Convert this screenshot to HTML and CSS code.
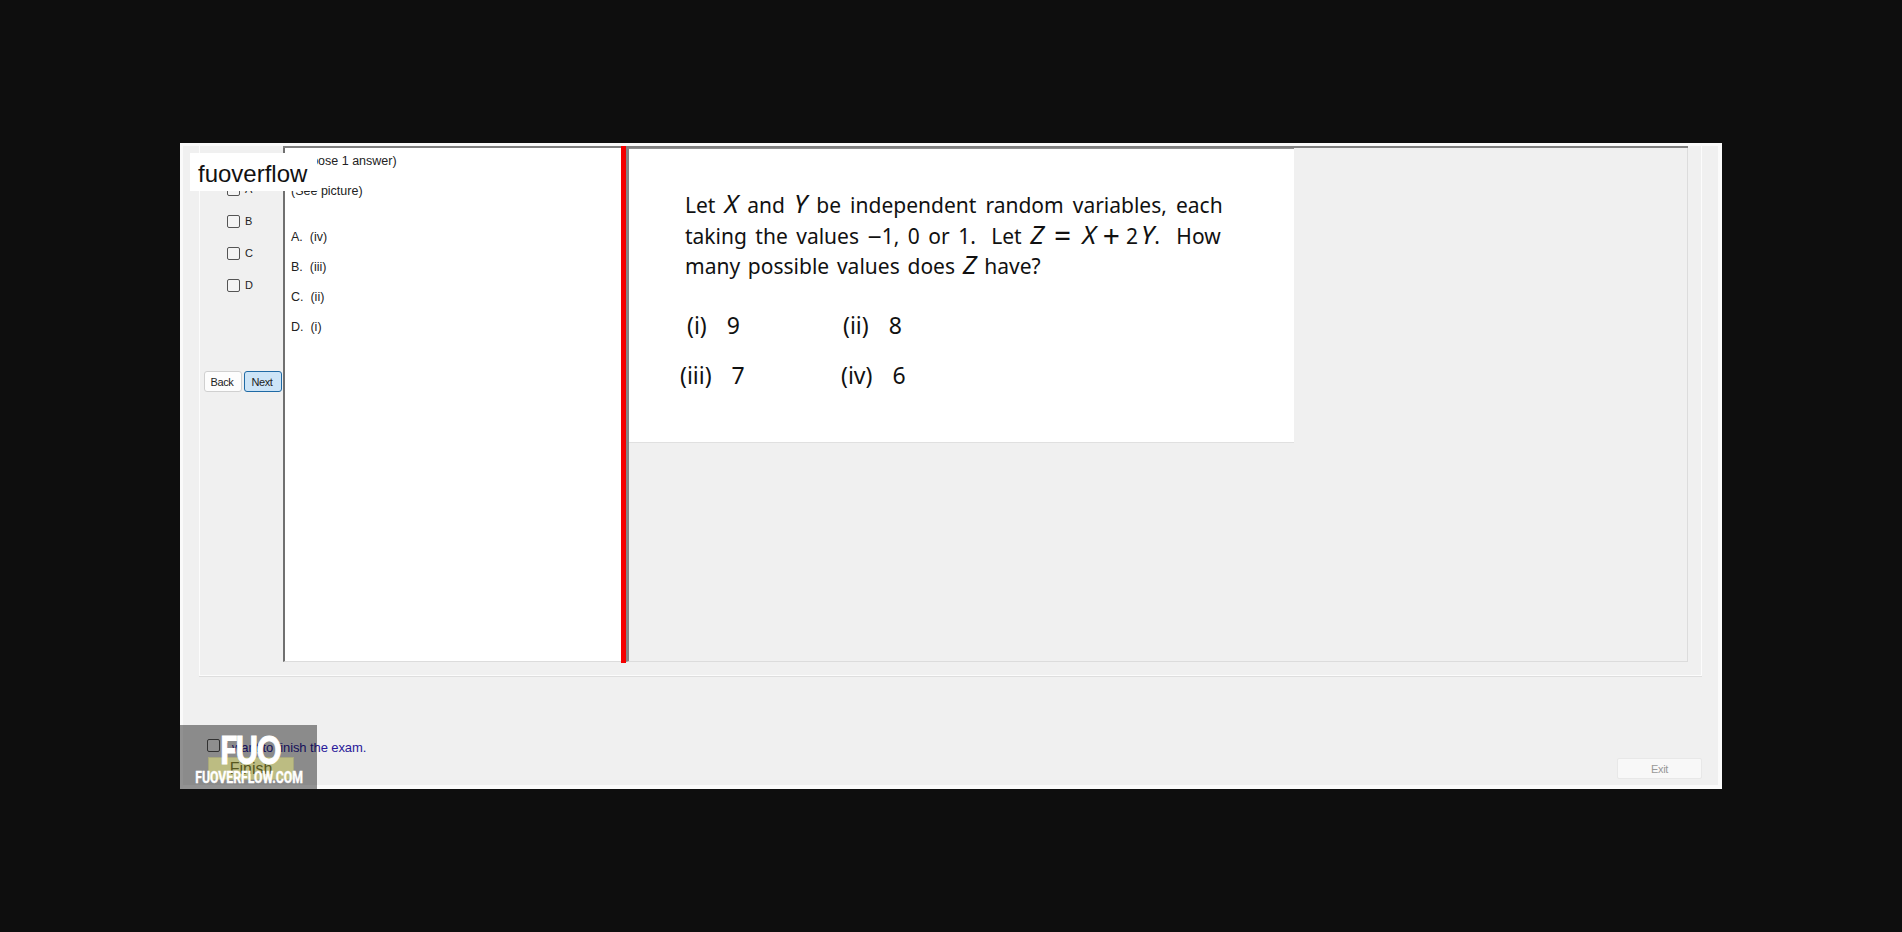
FILE: index.html
```html
<!DOCTYPE html>
<html lang="en">
    <head>
        <meta charset="UTF-8">
        <title>Exam Client</title>
        <link rel="stylesheet" href="styles.css">
    </head>
    <body>
      <div class="window">
        <div class="watermark">fuoverflow</div>
        <div class="group">
          <div class="answers">
            <label class="answer"><input type="checkbox"> A</label>
            <label class="answer"><input type="checkbox"> B</label>
            <label class="answer"><input type="checkbox"> C</label>
            <label class="answer"><input type="checkbox"> D</label>
            <div class="nav">
              <button type="button" class="nav-btn">Back</button>
              <button type="button" class="nav-btn nav-next">Next</button>
            </div>
          </div>
          <div class="panel">
            <div class="question">
              <p class="q-head">(Choose 1 answer)</p>
              <p class="q-see">(See picture)</p>
              <p class="q-opt">A.&nbsp; (iv)</p>
              <p class="q-opt">B.&nbsp; (iii)</p>
              <p class="q-opt">C.&nbsp; (ii)</p>
              <p class="q-opt">D.&nbsp; (i)</p>
            </div>
            <div class="splitter"></div>
            <div class="viewer">
              <div class="picture">
                <p class="pic-text pic-line1">Let <i>X</i> and <i>Y</i> be independent random variables, each</p>
                <p class="pic-text">taking the values <span class="minus">&minus;</span>1, 0 or 1.<span class="gap"></span> Let <i>Z</i><span class="op op-eq">=</span><i>X</i><span class="op op-plus">+</span>2<i class="pic-y">Y</i>.<span class="gap gap-how"></span> How</p>
                <p class="pic-text pic-line3">many possible values does <i>Z</i> have?</p>
                <div class="pic-options">
                  <div class="pic-opt pic-i">(i)<span>9</span></div>
                  <div class="pic-opt pic-ii">(ii)<span>8</span></div>
                  <div class="pic-opt">(iii)<span>7</span></div>
                  <div class="pic-opt pic-iv">(iv)<span>6</span></div>
                </div>
              </div>
            </div>
          </div>
        </div>
        <div class="footer">
          <div class="finish">
            <label class="finish-check"><input type="checkbox"> <span class="finish-text">I want to finish the exam.</span></label>
            <button type="button" class="finish-btn">Finish</button>
          </div>
          <button type="button" class="exit-btn">Exit</button>
        </div>
        <div class="logo">
          <span class="logo-mark">FUO</span>
          <span class="logo-name">FUOVERFLOW.COM</span>
        </div>
      </div>
    </body>
</html>
```
FILE: styles.css
```css
body {
    background: #0e0e0e;
    margin: 0;
    padding: 0;
    height: 100vh;
    display: flex;
    align-items: center;
    justify-content: center;
    font-family: "Liberation Sans", Arial, sans-serif;
}

p { margin: 0; }

input[type=checkbox] {
    appearance: none;
    width: 13px;
    height: 13px;
    margin: 0;
    background: #f4f4f4;
    border: 1px solid #555;
    border-radius: 2px;
    flex: none;
}

.window {
    position: relative;
    width: 1542px;
    height: 646px;
    box-sizing: border-box;
    padding: 3px 0 0 19px;
    background: #f0f0f0;
    box-shadow: inset 3px 3px 0 #fafafa, inset -4px -4px 0 #fbfbfb;
    overflow: hidden;
}

.watermark {
    position: absolute;
    left: 10px;
    top: 10px;
    width: 127px;
    height: 38px;
    box-sizing: border-box;
    padding: 2px 0 0 8px;
    background: #fff;
    color: #111;
    font-size: 24px;
    line-height: 38px;
    z-index: 5;
}

.group {
    display: flex;
    width: 1503px;
    height: 530px;
    box-sizing: border-box;
    padding-bottom: 13px;
    padding-right: 13px;
    border-left: 1px solid #fcfcfc;
    border-right: 1px solid #fcfcfc;
    border-bottom: 1px solid #fcfcfc;
    box-shadow: 0 1px 0 #dedede;
}

.answers {
    width: 83px;
    flex: none;
    padding: 27px 0 0 27px;
    box-sizing: border-box;
}

.answer {
    display: flex;
    align-items: center;
    gap: 5px;
    height: 32px;
    font-size: 11px;
    letter-spacing: -0.2px;
    color: #222;
}

.nav {
    display: flex;
    gap: 2px;
    margin: 70px 0 0 -23px;
}

.nav-btn {
    width: 38px;
    height: 21px;
    padding: 0 2px 0 0;
    background: #fdfdfd;
    border: 1px solid #d0d0d0;
    border-radius: 3px;
    color: #222;
    font-family: inherit;
    font-size: 11px;
    letter-spacing: -0.4px;
}

.nav-next {
    background: #cce4f7;
    border-color: #1f6aa5;
}

.panel {
    display: flex;
    flex: 1;
    border-top: 2px solid #808080;
}

.question {
    width: 338px;
    flex: none;
    box-sizing: border-box;
    padding: 6px 0 0 6px;
    background: #fff;
    border-left: 2px solid #707070;
    border-bottom: 1px solid #dcdcdc;
    color: #222;
    font-size: 12.5px;
    line-height: 14px;
}

.q-head { margin-bottom: 16px; }
.q-see { margin-bottom: 32px; }
.q-opt { margin-bottom: 16px; }

.splitter {
    width: 5px;
    flex: none;
    margin: -2px 0 -1px;
    background: #f40000;
}

.viewer {
    flex: 1;
    background: #f0f0f0;
    border-left: 3px solid #858585;
    border-right: 1px solid #dcdcdc;
    border-bottom: 1px solid #dcdcdc;
}

.picture {
    width: 665px;
    height: 295px;
    box-sizing: border-box;
    padding: 41px 0 0 56px;
    background: #fff;
    border-top: 1px solid #909090;
    border-bottom: 1px solid #e0e0e0;
    color: #111;
}

.pic-text {
    font-family: "Noto Sans", sans-serif;
    font-size: 21px;
    line-height: 30.5px;
    word-spacing: 3px;
    white-space: nowrap;
}

.pic-text i {
    font-size: 26px;
    line-height: 20px;
}

.pic-line1 { word-spacing: 3.6px; }
.pic-line3 { word-spacing: 2.3px; }

.minus { font-size: 25px; line-height: 20px; vertical-align: -2px; }
.gap { margin-left: 7px; }
.gap-how { margin-left: 8px; }

.op {
    font-size: 30px;
    line-height: 20px;
    vertical-align: -3px;
}

.op-eq { margin: 0 11px 0 10px; }
.op-plus { margin: 0 6px 0 7px; }
.pic-text .pic-y { margin-left: 3px; }

.pic-options {
    display: grid;
    grid-template-columns: 161px 200px;
    grid-auto-rows: 50px;
    margin: 26px 0 0 -5px;
}

.pic-opt {
    display: flex;
    gap: 20px;
    font-family: "Noto Sans", sans-serif;
    font-size: 23px;
    line-height: 34px;
}

.pic-i { padding-left: 7px; }
.pic-ii { padding-left: 2px; }

.footer {
    display: flex;
    align-items: flex-start;
    justify-content: space-between;
    width: 1503px;
    margin-top: 63px;
}

.finish-check {
    display: flex;
    align-items: flex-start;
    gap: 5px;
    margin-left: 8px;
    color: #2a1a9a;
    font-size: 13px;
}

.finish-text {
    margin-top: 1px;
    margin-bottom: 1px;
    letter-spacing: -0.1px;
}

.finish-btn {
    position: relative;
    z-index: 2;
    display: block;
    width: 86px;
    height: 23px;
    margin: 1px 0 0 9px;
    padding: 0;
    background: #bcbc82;
    border: 1px solid #a8a87c;
    color: #56561e;
    font-family: inherit;
    font-size: 16px;
}

.exit-btn {
    width: 85px;
    height: 21px;
    margin-top: 19px;
    padding: 0;
    background: #f8f8f8;
    border: 1px solid #e8e8e8;
    border-radius: 2px;
    color: #999;
    font-family: inherit;
    font-size: 11px;
    letter-spacing: -0.3px;
}

.logo {
    position: absolute;
    left: 0;
    bottom: 0;
    width: 137px;
    height: 64px;
    text-align: center;
    color: #fff;
}

.logo::before {
    content: "";
    position: absolute;
    inset: 0;
    z-index: 1;
    background: rgba(0, 0, 0, 0.42);
}

.logo-mark {
    position: absolute;
    left: 40px;
    top: 5px;
    z-index: 3;
    font-family: Lato, sans-serif;
    font-weight: 900;
    font-size: 38px;
    line-height: 38px;
    letter-spacing: -2px;
    -webkit-text-stroke: 1px #fff;
    transform: scaleX(0.8);
    transform-origin: left;
}

.logo-name {
    position: absolute;
    left: -4px;
    right: 4px;
    top: 42px;
    z-index: 3;
    font-family: Roboto, sans-serif;
    font-weight: 700;
    font-size: 17px;
    line-height: 20px;
    white-space: nowrap;
    -webkit-text-stroke: 0.4px #fff;
    transform: scaleX(0.72);
}
```
